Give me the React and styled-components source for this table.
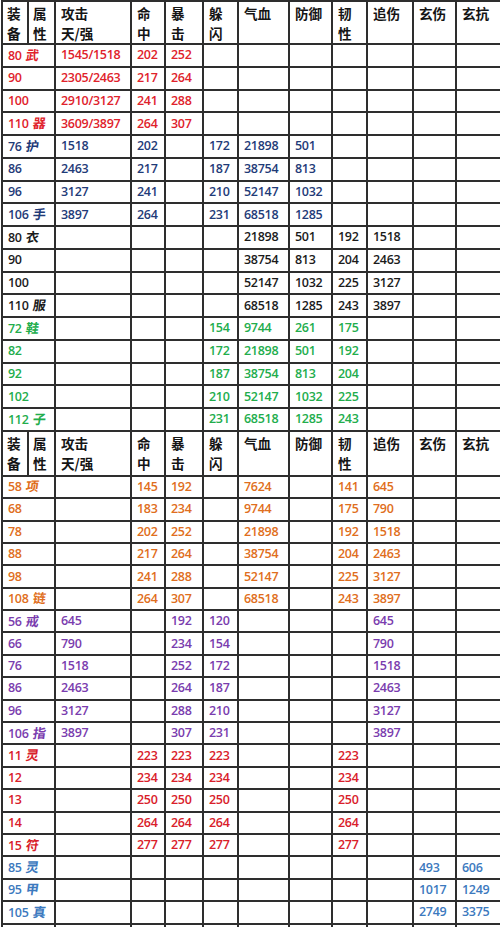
import React from "react";
import styled, { createGlobalStyle } from "styled-components";

const Global = createGlobalStyle`
  html, body { margin: 0; padding: 0; background: #ffffff; }
  body { overflow: hidden; }
`;

const COLORS = {
  red: "#e0222b",
  navy: "#1f3b78",
  black: "#1b1b1b",
  green: "#22ad4c",
  orange: "#df6e20",
  purple: "#7a3cae",
  red2: "#d9202a",
  blue: "#3c79be",
};

const WIDTHS = [26, 27, 76, 34, 38, 35, 51, 43, 35, 46, 43, 50];

const Sheet = styled.div`
  width: 500px;
  height: 927px;
  overflow: hidden;
  padding-left: 1px;
  box-sizing: border-box;
`;

const Table = styled.table`
  border-collapse: separate;
  border-spacing: 0;
  table-layout: fixed;
  width: ${WIDTHS.reduce((a, b) => a + b, 0) + 2}px;
  border-left: 2px solid #2e2e2e;
  border-top: ${(p) => (p.$top ? "2px solid #2e2e2e" : "none")};
`;

const Row = styled.tr`
  height: ${(p) => p.$h}px;
`;

const HeadCell = styled.th`
  box-sizing: border-box;
  width: ${(p) => p.$w}px;
  height: ${(p) => p.$h}px;
  border-right: 2px solid #2e2e2e;
  border-bottom: 2px solid #2e2e2e;
  padding: 1px 0 0 ${(p) => p.$pl ?? 5}px;
  vertical-align: top;
  text-align: left;
  font-family: "Noto Sans CJK SC", "Noto Sans", sans-serif;
  font-weight: 700;
  font-size: 13.6px;
  line-height: 20px;
  color: #151515;
  white-space: nowrap;
  overflow: hidden;
`;

const Line = styled.div`
  display: block;
  height: 20px;
`;

const Cell = styled.td`
  box-sizing: border-box;
  height: ${(p) => p.$h}px;
  border-right: 2px solid #2e2e2e;
  border-bottom: 2px solid #2e2e2e;
  padding: 0 0 0 5px;
  vertical-align: middle;
  text-align: left;
  font-family: "Open Sans", "Liberation Sans", sans-serif;
  font-weight: 600;
  font-size: 12.5px;
  letter-spacing: -0.3px;
  line-height: 16px;
  color: ${(p) => COLORS[p.$c]};
  white-space: nowrap;
  overflow: hidden;
`;

const LabelCell = styled(Cell)`
  padding-left: 5px;
`;

const Glyph = styled.span`
  font-family: "Noto Sans CJK SC", sans-serif;
  font-weight: 700;
  font-size: 13px;
  margin-left: 4px;
  letter-spacing: 0;
  display: inline-block;
  transform: skewX(-8deg);
`;

const HEAD = [
  ["装", "备"],
  ["属", "性"],
  ["攻击", "天/强"],
  ["命", "中"],
  ["暴", "击"],
  ["躲", "闪"],
  ["气血"],
  ["防御"],
  ["韧", "性"],
  ["追伤"],
  ["玄伤"],
  ["玄抗"],
];

const HeaderRow = ({ h }) => (
  <Row $h={h}>
    {HEAD.map((lines, i) => (
      <HeadCell key={i} $w={WIDTHS[i]} $h={h} $pl={i < 2 ? 4 : 5}>
        {lines.map((l, j) => (
          <Line key={j}>{l}</Line>
        ))}
      </HeadCell>
    ))}
  </Row>
);

const r = (c, lv, g, vals) => ({ c, lv, g, vals });

const SECTION1 = [
  r("red", "80", "武", ["1545/1518", "202", "252"]),
  r("red", "90", "", ["2305/2463", "217", "264"]),
  r("red", "100", "", ["2910/3127", "241", "288"]),
  r("red", "110", "器", ["3609/3897", "264", "307"]),
  r("navy", "76", "护", ["1518", "202", "", "172", "21898", "501"]),
  r("navy", "86", "", ["2463", "217", "", "187", "38754", "813"]),
  r("navy", "96", "", ["3127", "241", "", "210", "52147", "1032"]),
  r("navy", "106", "手", ["3897", "264", "", "231", "68518", "1285"]),
  r("black", "80", "衣", ["", "", "", "", "21898", "501", "192", "1518"]),
  r("black", "90", "", ["", "", "", "", "38754", "813", "204", "2463"]),
  r("black", "100", "", ["", "", "", "", "52147", "1032", "225", "3127"]),
  r("black", "110", "服", ["", "", "", "", "68518", "1285", "243", "3897"]),
  r("green", "72", "鞋", ["", "", "", "154", "9744", "261", "175"]),
  r("green", "82", "", ["", "", "", "172", "21898", "501", "192"]),
  r("green", "92", "", ["", "", "", "187", "38754", "813", "204"]),
  r("green", "102", "", ["", "", "", "210", "52147", "1032", "225"]),
  r("green", "112", "子", ["", "", "", "231", "68518", "1285", "243"]),
];

const SECTION2 = [
  r("orange", "58", "项", ["", "145", "192", "", "7624", "", "141", "645"]),
  r("orange", "68", "", ["", "183", "234", "", "9744", "", "175", "790"]),
  r("orange", "78", "", ["", "202", "252", "", "21898", "", "192", "1518"]),
  r("orange", "88", "", ["", "217", "264", "", "38754", "", "204", "2463"]),
  r("orange", "98", "", ["", "241", "288", "", "52147", "", "225", "3127"]),
  r("orange", "108", "链", ["", "264", "307", "", "68518", "", "243", "3897"]),
  r("purple", "56", "戒", ["645", "", "192", "120", "", "", "", "645"]),
  r("purple", "66", "", ["790", "", "234", "154", "", "", "", "790"]),
  r("purple", "76", "", ["1518", "", "252", "172", "", "", "", "1518"]),
  r("purple", "86", "", ["2463", "", "264", "187", "", "", "", "2463"]),
  r("purple", "96", "", ["3127", "", "288", "210", "", "", "", "3127"]),
  r("purple", "106", "指", ["3897", "", "307", "231", "", "", "", "3897"]),
  r("red2", "11", "灵", ["", "223", "223", "223", "", "", "223"]),
  r("red2", "12", "", ["", "234", "234", "234", "", "", "234"]),
  r("red2", "13", "", ["", "250", "250", "250", "", "", "250"]),
  r("red2", "14", "", ["", "264", "264", "264", "", "", "264"]),
  r("red2", "15", "符", ["", "277", "277", "277", "", "", "277"]),
  r("blue", "85", "灵", ["", "", "", "", "", "", "", "", "493", "606"]),
  r("blue", "95", "甲", ["", "", "", "", "", "", "", "", "1017", "1249"]),
  r("blue", "105", "真", ["", "", "", "", "", "", "", "", "2749", "3375"]),
  r("blue", "", "", ["", "", "", "", "", "", "", "", "", ""]),
];

const DataRow = ({ row, h }) => {
  const vals = [...row.vals];
  while (vals.length < 10) vals.push("");
  return (
    <Row $h={h}>
      <LabelCell colSpan={2} $c={row.c} $h={h}>
        {row.lv}
        {row.g && <Glyph>{row.g}</Glyph>}
      </LabelCell>
      {vals.map((v, i) => (
        <Cell key={i} $c={row.c} $h={h}>
          {v}
        </Cell>
      ))}
    </Row>
  );
};

export default function App() {
  return (
    <>
      <Global />
      <Sheet>
        <Table $top>
          <tbody>
            <HeaderRow h={42} />
            {SECTION1.map((row, i) => (
              <DataRow key={i} row={row} h={22.76} />
            ))}
          </tbody>
        </Table>
        <Table>
          <tbody>
            <HeaderRow h={45} />
            {SECTION2.map((row, i) => (
              <DataRow key={i} row={row} h={22.4} />
            ))}
          </tbody>
        </Table>
      </Sheet>
    </>
  );
}
